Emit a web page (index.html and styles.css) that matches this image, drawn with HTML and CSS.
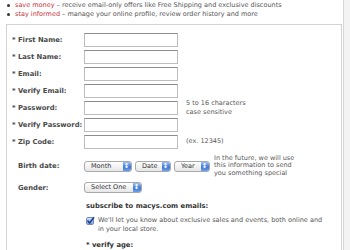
FILE: index.html
```html
<!DOCTYPE html>
<html lang="en">
<head>
    <meta charset="UTF-8">
    <meta name="viewport" content="width=device-width, initial-scale=1.0">
    <title>Create Account</title>
    <link rel="stylesheet" href="styles.css">
</head>
<body>
    <div class="page">
        <div class="main">
            <ul class="perks">
                <li><span class="hl">save money</span> &ndash; receive email-only offers like Free Shipping and exclusive discounts</li>
                <li><span class="hl">stay informed</span> &ndash; manage your online profile, review order history and more</li>
            </ul>

            <div class="form-box">
                <div class="row">
                    <label for="firstName">* First Name:</label>
                    <input type="text" id="firstName">
                </div>
                <div class="row">
                    <label for="lastName">* Last Name:</label>
                    <input type="text" id="lastName">
                </div>
                <div class="row">
                    <label for="email">* Email:</label>
                    <input type="text" id="email">
                </div>
                <div class="row">
                    <label for="verifyEmail">* Verify Email:</label>
                    <input type="text" id="verifyEmail">
                </div>
                <div class="row">
                    <label for="password">* Password:</label>
                    <input type="password" id="password">
                    <span class="hint">5 to 16 characters<br>case sensitive</span>
                </div>
                <div class="row">
                    <label for="verifyPassword">* Verify Password:</label>
                    <input type="password" id="verifyPassword">
                </div>
                <div class="row">
                    <label for="zip">* Zip Code:</label>
                    <input type="text" id="zip">
                    <span class="hint">(ex. 12345)</span>
                </div>

                <div class="row row-birth">
                    <label class="opt" for="month">Birth date:</label>
                    <div class="selects">
                        <span class="select w-month"><select id="month"><option>Month</option></select></span>
                        <span class="select w-date"><select><option>Date</option></select></span>
                        <span class="select w-year"><select><option>Year</option></select></span>
                        <span class="hint note">In the future, we will use<br>this information to send<br>you something special</span>
                    </div>
                </div>
                <div class="row row-gender">
                    <label class="opt" for="gender">Gender:</label>
                    <div class="selects">
                        <span class="select w-gender"><select id="gender"><option>Select One</option></select></span>
                    </div>
                </div>

                <div class="subscribe">
                    <h4>subscribe to macys.com emails:</h4>
                    <div class="check-row">
                        <span class="check">
                            <svg width="9" height="9" viewBox="0 0 9 9">
                                <path d="M1.5 4.5 L3.6 7 L8 1.2" fill="none" stroke="#1d3f8c" stroke-width="1.6"/>
                            </svg>
                        </span>
                        <p>We'll let you know about exclusive sales and events, both online and in your local store.</p>
                    </div>
                    <h4 class="age">* verify age:</h4>
                </div>
            </div>
        </div>
        <div class="side"></div>
    </div>
</body>
</html>
```

FILE: styles.css
```css
body {
    margin: 0;
    font-family: "DejaVu Sans", Verdana, sans-serif;
    font-size: 6.5px;
    color: #555;
    background: #fff;
}

.page {
    display: flex;
    height: 250px;
    overflow: hidden;
}

.main {
    width: 344px;
}

.side {
    width: 6px;
    background: #f3f3f3;
    border-left: 1px solid #d6d6d6;
}

.perks {
    margin: 0;
    padding: 1px 0 0 15px;
    line-height: 9px;
}

.perks li {
    list-style: none;
    position: relative;
}

.perks li::before {
    content: "";
    position: absolute;
    left: -8px;
    top: 3px;
    width: 3px;
    height: 3px;
    border-radius: 50%;
    background: #333;
}

.hl {
    color: #c8333a;
}

.form-box {
    margin: 5px 0 0 6px;
    width: 336px;
    height: 240px;
    border: 1px solid #d2d2d2;
    box-sizing: border-box;
    padding: 6px 0 0 5px;
}

.row {
    display: flex;
    align-items: center;
    height: 17px;
}

.row label {
    width: 72px;
    flex-shrink: 0;
    font-size: 6.8px;
    font-weight: bold;
    color: #4a4a4a;
}

.row label.opt {
    padding-left: 6px;
    width: 66px;
}

.row input {
    width: 94px;
    height: 14px;
    box-sizing: border-box;
    margin: 0;
    border: 1px solid #bdbdbd;
    border-top-color: #8c8c8c;
    background: #fff;
}

.hint {
    margin-left: 8px;
    line-height: 8.5px;
    color: #585858;
}

.row-birth {
    height: 24px;
    margin-top: 4px;
}

.row-gender {
    height: 19px;
}

.selects {
    display: flex;
    align-items: center;
}

.select {
    position: relative;
    display: inline-block;
    height: 11px;
    margin-right: 3px;
    border: 1px solid #a9a9a9;
    border-radius: 3px;
    box-sizing: border-box;
    background: linear-gradient(#ffffff, #e6e6e6);
}

.select::after {
    content: "";
    position: absolute;
    right: 0;
    top: 0;
    bottom: 0;
    width: 8px;
    border-radius: 0 2px 2px 0;
    background: linear-gradient(#9fc0f0, #3c78d8 55%, #6ea0ea);
}

.select::before {
    content: "\2195";
    position: absolute;
    right: 1px;
    top: 0;
    width: 7px;
    z-index: 1;
    color: #fff;
    font-size: 7px;
    font-weight: bold;
    line-height: 9px;
    text-align: center;
}

.select select {
    appearance: none;
    -webkit-appearance: none;
    border: none;
    background: transparent;
    font-family: "DejaVu Sans", Verdana, sans-serif;
    font-size: 6.5px;
    color: #333;
    width: 100%;
    height: 9px;
    padding: 0 0 0 6px;
    line-height: 9px;
    display: block;
}

.w-month { width: 48px; }
.w-date { width: 36px; }
.w-year { width: 36px; }
.w-gender { width: 58px; }

.note {
    margin-left: 1px;
    line-height: 7.5px;
}

.subscribe {
    padding-left: 74px;
    padding-top: 5px;
}

.subscribe h4 {
    margin: 0;
    font-size: 6.8px;
    color: #333;
    line-height: 9px;
}

.check-row {
    display: flex;
    align-items: flex-start;
    margin-top: 5px;
}

.check {
    width: 8px;
    height: 8px;
    flex-shrink: 0;
    border: 1px solid #7a8eb5;
    border-radius: 2px;
    background: linear-gradient(#cfe0fa, #7fa6e8);
    box-sizing: border-box;
    position: relative;
    margin-top: 1px;
}

.check svg {
    position: absolute;
    left: -1px;
    top: -2px;
}

.check-row p {
    margin: 0 0 0 4px;
    line-height: 8.5px;
    width: 232px;
}

.subscribe h4.age {
    margin-top: 8px;
}
```
